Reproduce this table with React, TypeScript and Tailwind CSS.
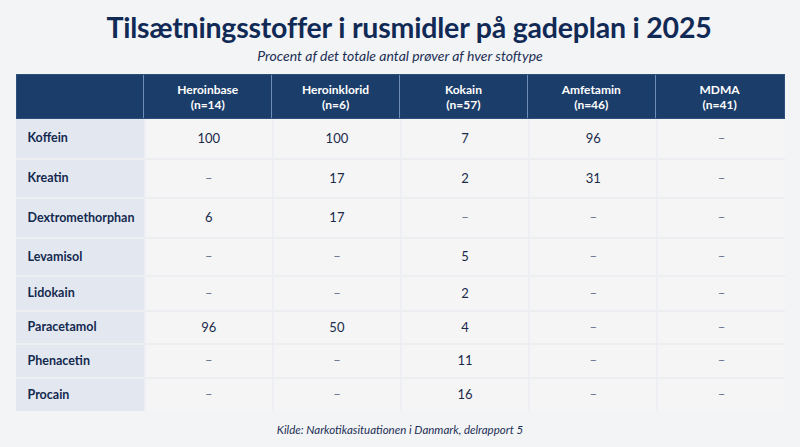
const columns = [
  { name: 'Heroinbase', n: 'n=14' },
  { name: 'Heroinklorid', n: 'n=6' },
  { name: 'Kokain', n: 'n=57' },
  { name: 'Amfetamin', n: 'n=46' },
  { name: 'MDMA', n: 'n=41' },
];

const rows = [
  { name: 'Koffein', values: ['100', '100', '7', '96', '-'], h: 'h-[39px]' },
  { name: 'Kreatin', values: ['-', '17', '2', '31', '-'], h: 'h-[39px]' },
  { name: 'Dextromethorphan', values: ['6', '17', '-', '-', '-'], h: 'h-[40px]' },
  { name: 'Levamisol', values: ['-', '-', '5', '-', '-'], h: 'h-[38px]' },
  { name: 'Lidokain', values: ['-', '-', '2', '-', '-'], h: 'h-[35px]' },
  { name: 'Paracetamol', values: ['96', '50', '4', '-', '-'], h: 'h-[33px]' },
  { name: 'Phenacetin', values: ['-', '-', '11', '-', '-'], h: 'h-[34px]' },
  { name: 'Procain', values: ['-', '-', '16', '-', '-'], h: 'h-[34px]' },
];

export default function App() {
  return (
    <div
      className="w-[800px] h-[447px] bg-[#f3f4f6] text-[#12284c] flex flex-col items-center overflow-hidden"
      style={{ fontFamily: 'Lato, "Open Sans", sans-serif' }}
    >
      <h1 className="mt-[9px] pl-[18px] text-[28.5px] leading-[36px] font-bold tracking-[-0.2px] text-[#112a55]">
        Tilsætningsstoffer i rusmidler på gadeplan i 2025
      </h1>
      <p className="mt-[2px] text-[14px] leading-[18px] italic text-[#1c2f55]">
        Procent af det totale antal prøver af hver stoftype
      </p>

      <div className="mt-[9px] w-[769px] flex flex-col">
        {/* Header */}
        <div className="grid grid-cols-6 h-[45px] bg-[#1b3d69] border border-[#2c4f7c]">
          <div className="border-r border-[#6f8db5]" />
          {columns.map((c, i) => (
            <div
              key={c.name}
              className={`flex flex-col items-center justify-center text-white text-[12px] font-bold leading-[15px] ${
                i < columns.length - 1 ? 'border-r border-[#6f8db5]' : ''
              }`}
            >
              <span>{c.name}</span>
              <span>({c.n})</span>
            </div>
          ))}
        </div>

        {/* Body */}
        {rows.map((r, ri) => (
          <div
            key={r.name}
            className={`grid grid-cols-6 ${r.h} ${ri > 0 ? 'border-t-2 border-[#eceef2]' : ''}`}
          >
            <div className="bg-[#e3e8f0] flex items-center pl-[12px] text-[12.5px] font-bold text-[#13294f]">
              {r.name}
            </div>
            {r.values.map((v, i) => (
              <div
                key={i}
                className="bg-[#f5f5f6] border-l-2 border-[#eeeff2] flex items-center justify-center text-[13px] text-[#1a2b4a]"
              >
                {v === '-' ? <span className="text-[#6a7289]">–</span> : v}
              </div>
            ))}
          </div>
        ))}
      </div>

      <p className="mt-[10px] text-[11.5px] italic text-[#1c2f55]">
        Kilde: Narkotikasituationen i Danmark, delrapport 5
      </p>
    </div>
  );
}
